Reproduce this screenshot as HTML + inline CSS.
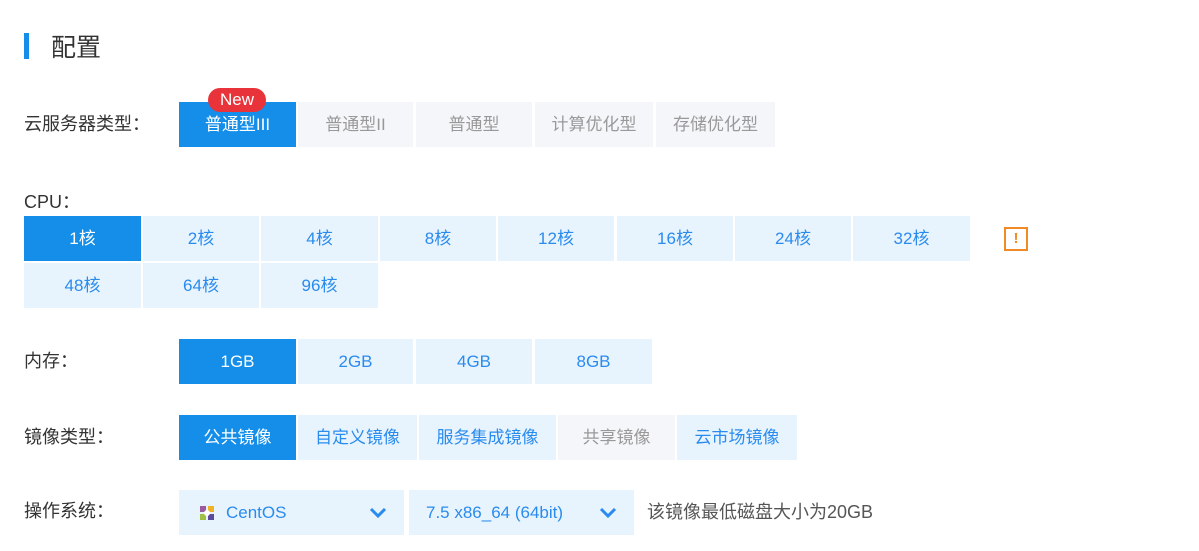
<!DOCTYPE html><html><head><meta charset="utf-8"><style>
body{margin:0;width:1199px;height:551px;background:#fff;font-family:"Liberation Sans","Noto Sans CJK SC",sans-serif;position:relative;overflow:hidden}
.a{position:absolute}
.b{position:absolute;height:45px;line-height:45px;text-align:center;font-size:17px;background:#e8f4fd;color:#2a8bee}
.on{background:#148ee9;color:#fff}
.g{background:#f4f6f9;color:#999}
.l{position:absolute;font-size:18px;color:#333}
</style></head><body>
<div class="a" style="left:24px;top:33px;width:5px;height:26px;background:#148ee9"></div>
<div class="a" style="left:51px;top:28px;font-size:25px;color:#333">配置</div>
<div class="l" style="left:24px;top:110px">云服务器类型：</div>
<div class="b on" style="left:179px;top:102px;width:117px">普通型III</div>
<div class="a" style="left:208px;top:88px;width:58px;height:24px;border-radius:12px;background:#e8333b;color:#fff;font-size:17px;line-height:24px;text-align:center">New</div>
<div class="b g" style="left:298px;top:102px;width:115px">普通型II</div>
<div class="b g" style="left:416px;top:102px;width:116px">普通型</div>
<div class="b g" style="left:535px;top:102px;width:118px">计算优化型</div>
<div class="b g" style="left:656px;top:102px;width:119px">存储优化型</div>
<div class="l" style="left:24px;top:188px">CPU：</div>
<div class="b on" style="left:24px;top:216px;width:117px">1核</div>
<div class="b" style="left:143px;top:216px;width:116px">2核</div>
<div class="b" style="left:261px;top:216px;width:117px">4核</div>
<div class="b" style="left:380px;top:216px;width:116px">8核</div>
<div class="b" style="left:498px;top:216px;width:116px">12核</div>
<div class="b" style="left:617px;top:216px;width:116px">16核</div>
<div class="b" style="left:735px;top:216px;width:116px">24核</div>
<div class="b" style="left:853px;top:216px;width:117px">32核</div>
<div class="a" style="left:1004px;top:227px;width:20px;height:20px;border:2px solid #f08a24;color:#f08a24;font-size:15px;font-weight:bold;line-height:20px;text-align:center">!</div>
<div class="b" style="left:24px;top:263px;width:117px">48核</div>
<div class="b" style="left:143px;top:263px;width:116px">64核</div>
<div class="b" style="left:261px;top:263px;width:117px">96核</div>
<div class="l" style="left:24px;top:347px">内存：</div>
<div class="b on" style="left:179px;top:339px;width:117px">1GB</div>
<div class="b" style="left:298px;top:339px;width:115px">2GB</div>
<div class="b" style="left:416px;top:339px;width:116px">4GB</div>
<div class="b" style="left:535px;top:339px;width:117px">8GB</div>
<div class="l" style="left:24px;top:423px">镜像类型：</div>
<div class="b on" style="left:179px;top:415px;width:117px">公共镜像</div>
<div class="b" style="left:298px;top:415px;width:119px">自定义镜像</div>
<div class="b" style="left:419px;top:415px;width:137px">服务集成镜像</div>
<div class="b g" style="left:558px;top:415px;width:117px">共享镜像</div>
<div class="b" style="left:677px;top:415px;width:120px">云市场镜像</div>
<div class="l" style="left:24px;top:497px">操作系统：</div>
<div class="b" style="left:179px;top:490px;width:225px;text-align:left">
<svg class="a" style="left:19px;top:14px" width="18" height="18" viewBox="0 0 18 18"><rect x="2" y="2" width="6" height="6" fill="#9c5aa0"/><rect x="10" y="2" width="6" height="6" fill="#f0b323"/><rect x="2" y="10" width="6" height="6" fill="#a0c045"/><rect x="10" y="10" width="6" height="6" fill="#5c4a9a"/><circle cx="9" cy="9" r="3" fill="#fff"/></svg>
<span class="a" style="left:47px">CentOS</span>
<svg class="a" style="left:190px;top:17px" width="18" height="12" viewBox="0 0 18 12"><path d="M2 2l7 7 7-7" stroke="#2a8bee" stroke-width="3" fill="none"/></svg></div>
<div class="b" style="left:409px;top:490px;width:225px;text-align:left">
<span class="a" style="left:17px">7.5 x86_64 (64bit)</span>
<svg class="a" style="left:190px;top:17px" width="18" height="12" viewBox="0 0 18 12"><path d="M2 2l7 7 7-7" stroke="#2a8bee" stroke-width="3" fill="none"/></svg></div>
<div class="l" style="left:647px;top:498px;color:#555">该镜像最低磁盘大小为20GB</div>
</body></html>
